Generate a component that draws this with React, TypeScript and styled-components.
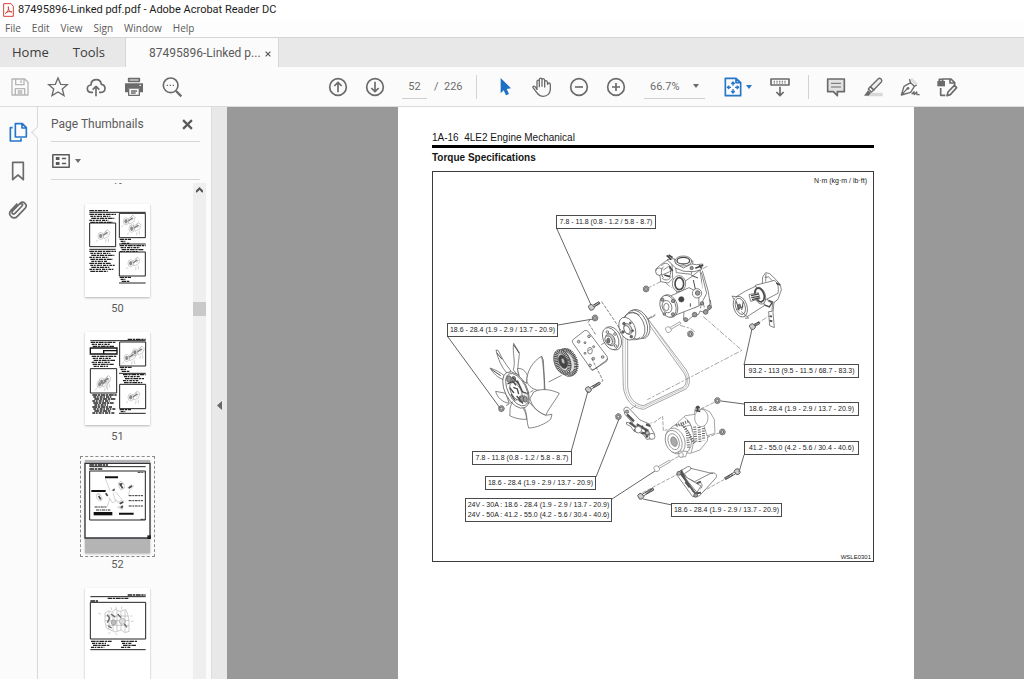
import React from "react";
import styled, { createGlobalStyle } from "styled-components";

const GlobalStyle = createGlobalStyle`
  * { box-sizing: border-box; }
  body { margin: 0; background: #fbfbfb; }
  button, input, select { font: inherit; color: inherit; }
  button { border: 0; padding: 0; background: none; cursor: pointer; }
`;

const uiFont = `Roboto, "Open Sans", sans-serif`;
const menuFont = `"Open Sans", "Noto Sans", sans-serif`;
const docFont = `"Liberation Sans", Arial, sans-serif`;

const Shell = styled.div`
  display: flex;
  flex-direction: column;
  height: 100vh;
  overflow: hidden;
  font-family: ${uiFont};
  font-size: 11px;
  color: #5a5a5a;
`;

const TitleBar = styled.header`
  display: flex;
  align-items: center;
  gap: 4px;
  flex: none;
  height: 20px;
  padding: 0 3px;
  background: #fff;
  color: #1c1c1c;
`;

const TitleText = styled.h1`
  margin: 0;
  font-size: 11px;
  font-weight: 400;
  line-height: 20px;
`;

const MenuBar = styled.nav`
  display: flex;
  gap: 11px;
  flex: none;
  height: 17px;
  padding: 0 5px;
  background: #fdfdfd;
  font-family: ${menuFont};
`;

const MenuItem = styled.button`
  font-size: 10px;
  line-height: 17px;
`;

const TabBar = styled.div`
  display: flex;
  flex: none;
  height: 30px;
  border-top: 1px solid #d6d6d6;
  background: #e8e8e8;
`;

const MainTabs = styled.div`
  display: flex;
  gap: 24px;
  width: 125px;
  padding: 0 0 2px 12px;
  font-family: ${menuFont};
  font-size: 13px;
  color: #3c3c3c;
`;

const FileTab = styled.div`
  display: flex;
  align-items: center;
  justify-content: space-between;
  width: 154px;
  padding: 0 7px 0 23px;
  border: solid #d6d6d6;
  border-width: 0 1px;
  background: #fbfbfb;
  font-size: 12px;
`;

const Toolbar = styled.div`
  display: flex;
  align-items: center;
  justify-content: space-between;
  flex: none;
  height: 40px;
  padding: 0 62px 0 5px;
  border-bottom: 1px solid #dcdcdc;
  background: #fbfbfb;
  color: #6b6b6b;
`;

const ToolGroup = styled.div<{ $gap?: number }>`
  display: flex;
  align-items: center;
  gap: ${(p) => p.$gap ?? 8}px;
`;

const ToolButton = styled.button<{ $tone?: string }>`
  display: flex;
  align-items: center;
  justify-content: center;
  width: 30px;
  height: 30px;
  color: ${(p) => p.$tone ?? "#6b6b6b"};
`;

const Divider = styled.span<{ $before: number; $after: number }>`
  width: 1px;
  height: 24px;
  margin: 0 ${(p) => p.$after}px 0 ${(p) => p.$before}px;
  background: #d2d2d2;
`;

const PageField = styled.input`
  width: 25px;
  height: 24px;
  margin-left: 5px;
  padding: 0;
  border: 0;
  border-bottom: 1px solid #cfcfcf;
  background: none;
  text-align: center;
`;

const PageTotal = styled.span`
  width: 26px;
  white-space: nowrap;
`;

const ZoomBox = styled.div`
  display: flex;
  align-items: center;
  width: 61px;
  height: 24px;
  margin-left: 6px;
  padding-right: 6px;
  border-bottom: 1px solid #cfcfcf;
`;

const ZoomSelect = styled.select`
  flex: 1;
  min-width: 0;
  appearance: none;
  border: 0;
  padding: 0 0 0 6px;
  background: none;
`;

const Caret = styled.span<{ $tone?: string }>`
  flex: none;
  border: 3px solid transparent;
  border-top: 4px solid ${(p) => p.$tone ?? "#6b6b6b"};
  border-bottom: 0;
`;

const FitButton = styled.button`
  display: flex;
  align-items: center;
  gap: 2px;
  width: 34px;
  margin: 0 2px 0 10px;
  color: #2777c9;
`;

const Body = styled.div`
  display: flex;
  flex: 1;
  min-height: 0;
`;

const Rail = styled.nav`
  position: relative;
  display: flex;
  flex-direction: column;
  gap: 15px;
  flex: none;
  width: 38px;
  padding-top: 13px;
  border-right: 1px solid #d9d9d9;
`;

const RailButton = styled.button<{ $active?: boolean }>`
  display: flex;
  align-items: center;
  justify-content: center;
  width: 35px;
  height: 24px;
  color: ${(p) => (p.$active ? "#2777c9" : "#6b6b6b")};

  &::after {
    content: "";
    display: ${(p) => (p.$active ? "block" : "none")};
    position: absolute;
    right: -5px;
    width: 8px;
    height: 8px;
    border: solid #d9d9d9;
    border-width: 0 0 1px 1px;
    background: #fbfbfb;
    transform: rotate(45deg);
  }
`;

const Panel = styled.aside`
  display: flex;
  flex-direction: column;
  flex: none;
  width: 174px;
  border-right: 1px solid #dedede;
`;

const PanelRow = styled.div<{ $height: number }>`
  display: flex;
  align-items: center;
  gap: 4px;
  flex: none;
  height: ${(p) => p.$height}px;
  margin: 0 11px 0 13px;
  border-bottom: 1px solid #d6d6d6;
`;

const PanelTitle = styled.h2`
  flex: 1;
  margin: 0;
  font-size: 12px;
  font-weight: 400;
`;

const PanelClose = styled.button`
  display: flex;
  padding: 4px 7px;
`;

const ThumbArea = styled.div`
  display: flex;
  flex: 1;
  min-height: 0;
  margin-top: 3px;
`;

const ThumbList = styled.div`
  display: flex;
  flex-direction: column;
  align-items: center;
  gap: 11px;
  flex: 1;
  padding-left: 4px;
  overflow: hidden;
`;

const ThumbItem = styled.button`
  flex: none;
  display: flex;
  flex-direction: column;
  align-items: center;
`;

const ThumbFrame = styled.span<{ $selected?: boolean }>`
  display: block;
  width: 75px;
  height: 101px;
  padding: 3px 4px;
  border: 1px dashed ${(p) => (p.$selected ? "#8a8a8a" : "transparent")};
`;

const ThumbPage = styled.span`
  display: block;
  height: 93px;
  background: #fff;
  box-shadow: 0 1px 2px #b5b5b5;
`;

const ThumbArt = styled.svg`
  display: block;
  width: 65px;
  height: 93px;
  overflow: visible;
`;

const ThumbLabel = styled.span<{ $cut?: boolean }>`
  display: block;
  flex: none;
  height: 16px;
  margin-top: ${(p) => (p.$cut ? -10 : 0)}px;
  line-height: 15px;
  font-size: 11px;
`;

const ScrollTrack = styled.div`
  display: flex;
  flex-direction: column;
  align-items: center;
  gap: 108px;
  flex: none;
  width: 13px;
  margin-right: 5px;
  padding-top: 4px;
  background: #efefef;
`;

const ScrollThumb = styled.div`
  width: 13px;
  height: 14px;
  background: #c9c9c9;
`;

const Collapser = styled.button`
  display: flex;
  align-items: center;
  justify-content: center;
  flex: none;
  width: 15px;
  padding-top: 24px;
  background: #e8e8e8;
`;

const Desk = styled.main`
  display: flex;
  justify-content: center;
  flex: 1;
  min-width: 0;
  padding-left: 61px;
  background: #999;
`;

const Sheet = styled.article`
  flex: none;
  width: 516px;
  padding: 24px 40px 0 34px;
  background: #fff;
  font-family: ${docFont};
  color: #161616;
`;

const SheetHeader = styled.p`
  margin: 0;
  border-bottom: 3px solid #000;
  font-size: 10px;
  line-height: 14px;
  white-space: pre;
`;

const SheetTitle = styled.h3`
  margin: 3px 0 6px;
  font-size: 10px;
  line-height: 14px;
`;

const Figure = styled.figure`
  position: relative;
  height: 391px;
  margin: 0;
  border: 1px solid #3a3a3a;
  font-size: 7px;
  color: #222;
`;

const Drawing = styled.svg`
  display: block;
  width: 440px;
  height: 389px;
`;

const Callout = styled.div<{ $x: number; $y: number; $w: number }>`
  position: absolute;
  left: ${(p) => p.$x}px;
  top: ${(p) => p.$y}px;
  width: ${(p) => p.$w}px;
  padding: 1px 0;
  border: 1px solid #4a4a4a;
  background: #fff;
  line-height: 10px;
  text-align: center;
  white-space: pre-line;
`;

const Units = styled.span`
  position: absolute;
  top: 4px;
  right: 6px;
  line-height: 10px;
`;

const DrawingNumber = styled.figcaption`
  position: absolute;
  right: 2px;
  bottom: 0;
  font-size: 6px;
  line-height: 8px;
`;

/* Every icon is drawn on a 66-unit grid. */
function Icon({ children, size = 22, width = 5 }: { children: React.ReactNode; size?: number; width?: number }) {
  return (
    <svg width={size} height={size} viewBox="0 0 66 66" fill="none" stroke="currentColor" strokeWidth={width} strokeLinejoin="round" aria-hidden="true">
      {children}
    </svg>
  );
}

const SaveIcon = () => (
  <Icon width={4}>
    <path d="M9 9H47L57 19V57H9ZM20 9V26H45V9M36 13V21M19 57V38H47V57M26 45H40M26 51H40" />
  </Icon>
);
const StarIcon = () => (
  <Icon width={4}>
    <path d="M33 6L41 25L61 26L46 39L51 59L33 48L15 59L20 39L5 26L25 25Z" strokeLinejoin="miter" />
  </Icon>
);
const CloudIcon = () => (
  <Icon>
    <path d="M24 49H17C3 47 4 28 18 27C18 7 46 5 49 25C64 27 63 48 49 49H42M33 61V32M23 41L33 31L43 41" />
  </Icon>
);
const PrintIcon = () => (
  <Icon>
    <path d="M17 8H49V16H17Z" />
    <path d="M6 22H60V49H51V38H15V49H6Z" fill="currentColor" stroke="none" />
    <path d="M17 38V58H49V38M24 45H42M24 51H38" strokeWidth="4" />
    <path d="M49 28H54" stroke="#fff" strokeWidth="3" />
  </Icon>
);
const FindIcon = () => (
  <Icon>
    <circle cx="29" cy="28" r="22" />
    <path d="M45 45L61 61" strokeWidth="7" />
    <path d="M17 28H42" strokeDasharray="4 5" strokeWidth="4" />
  </Icon>
);
const CircleIcon = ({ d }: { d: string }) => (
  <Icon>
    <circle cx="33" cy="33" r="25" />
    <path d={d} />
  </Icon>
);
const PointerIcon = () => (
  <Icon>
    <path d="M20 6L51 37L38 39L45 54L36 58L29 43L20 52Z" fill="currentColor" stroke="none" />
  </Icon>
);
const HandIcon = () => (
  <Icon width={4}>
    <path d="M18 42V17C18 11 25 11 25 17V32V11C25 5 33 5 33 11V31V12C33 6 41 7 41 13V33V18C41 12 49 13 49 19L50 25C51 19 58 20 58 26V41C57 52 49 61 37 61C27 61 21 55 17 49L6 35C4 29 11 27 18 40" />
  </Icon>
);
const FitIcon = () => (
  <Icon>
    <path d="M10 7H42L56 20V59H10ZM42 7V20H56" />
    <path d="M33 19V29M28 24L33 18L38 24M33 39V50M28 45L33 51L38 45M17 34H27M22 29L16 34L22 39M39 34H49M44 29L50 34L44 39" strokeWidth="4" />
  </Icon>
);
const KeysIcon = () => (
  <Icon>
    <path d="M6 9H60V27H6ZM33 32V58M22 48L33 59L44 48" />
    <path d="M14 16H53M14 21H53" strokeWidth="3" strokeDasharray="4 4" />
  </Icon>
);
const CommentIcon = () => (
  <Icon>
    <path d="M8 9H58V47H37V59L25 47H8Z" fill="#e2e2e2" />
    <path d="M18 22H48M18 33H48" strokeWidth="3" />
  </Icon>
);
const MarkerIcon = () => (
  <Icon width={4}>
    <path d="M27 50H62V61H12Z" fill="#d8d8d8" stroke="none" />
    <path d="M25 32L49 8C54 4 63 12 58 18L35 42Z" fill="#eee" />
    <path d="M25 32L19 39L28 48L36 42Z" />
    <path d="M18 43L6 59H20L27 50Z" fill="currentColor" stroke="none" />
  </Icon>
);
const SignIcon = () => (
  <Icon width={4}>
    <path d="M30 10L40 6L56 23L50 27Z" fill="#e0e0e0" stroke="none" />
    <path d="M31 10L35 20L46 31L53 27M35 20L15 31L7 57L35 49L46 31M8 56L25 38" />
    <path d="M38 55L45 47L46 56L53 48L54 56H62" />
    <circle cx="27" cy="37" r="4" fill="currentColor" stroke="none" />
  </Icon>
);
const EditDocIcon = () => (
  <Icon width={5}>
    <path d="M20 9H45L56 20V28M42 9V21H56M14 36V58H28" />
    <path d="M4 15H27V31H4Z" fill="currentColor" stroke="none" />
    <path d="M10 15V10H20V15" />
    <path d="M36 48L55 28L62 35L43 56L33 59Z" fill="#fbfbfb" />
  </Icon>
);
const AcrobatIcon = () => (
  <svg width="11" height="14" viewBox="0 0 33 42" aria-hidden="true">
    <path d="M2 2H24L31 10V40H2Z" fill="#fff" stroke="#d6403a" strokeWidth="3" />
    <path d="M7 31C14 29 18 18 16 11C15 20 21 28 27 27C20 24 12 26 7 31Z" fill="none" stroke="#d6403a" strokeWidth="3" />
  </svg>
);
const CrossIcon = ({ size, width }: { size: number; width: number }) => (
  <svg width={size} height={size} viewBox="0 0 10 10" stroke="currentColor" strokeWidth={width} aria-hidden="true">
    <path d="M1 1L9 9M9 1L1 9" />
  </svg>
);

/* Thumbnails: a 195 x 279 grid, three units to the pixel. */
type Block = { x: number; y: number; w: number; rows: number };

function TextBlock({ x, y, w, rows }: Block) {
  return (
    <g stroke="#222" strokeWidth="4">
      {Array.from({ length: rows }, (_, i) => (
        <path key={i} d={`M${x + (i % 3) * 3} ${y + i * 6}H${x + w - ((i * 17) % 29)}`} strokeDasharray={i % 2 ? "9 2 5 3" : "14 2 7 2"} />
      ))}
    </g>
  );
}

const Gear = ({ x, y }: { x: number; y: number }) => (
  <g transform={`translate(${x} ${y})`} fill="none" stroke="#777" strokeWidth="1">
    <ellipse cx="-8" cy="6" rx="8" ry="11" />
    <ellipse cx="-8" cy="6" rx="4" ry="6" fill="#888" />
    <path d="M-2 0L12-12L20-6L16 7L2 14ZM12-12L4-4M8 4L16-3M-16 18L-22 23M8 16L7 26M14 12L16 24M4 2L14-4" />
    <path d="M0 4L12-5" strokeWidth="4" />
  </g>
);

function ThumbFifty() {
  return (
    <>
      <path d="M13 25H182M102 120H182M13 136H92M102 237H182" stroke="#222" strokeWidth="3" />
      <TextBlock x={13} y={20} w={56} rows={1} />
      <TextBlock x={13} y={31} w={80} rows={5} />
      <TextBlock x={13} y={142} w={80} rows={11} />
      <TextBlock x={104} y={106} w={34} rows={3} />
      <TextBlock x={104} y={125} w={78} rows={4} />
      <TextBlock x={104} y={220} w={34} rows={3} />
      <g fill="#fff" stroke="#222" strokeWidth="3">
        <path d="M14 57H92V128H14ZM103 28H181V101H103ZM103 144H181V216H103Z" />
      </g>
      <Gear x={55} y={90} />
      <Gear x={131} y={46} />
      <Gear x={148} y={68} />
      <Gear x={145} y={172} />
    </>
  );
}

function ThumbFiftyOne() {
  return (
    <>
      <path d="M16 26H182M102 124H182M102 244H182" stroke="#222" strokeWidth="3" />
      <TextBlock x={128} y={22} w={54} rows={1} />
      <TextBlock x={17} y={31} w={76} rows={3} />
      <path d="M16 48H96V66H16ZM56 56H96V66H56Z" fill="#fff" stroke="#111" strokeWidth="4" />
      <TextBlock x={20} y={73} w={76} rows={6} />
      <TextBlock x={22} y={189} w={74} rows={10} />
      <TextBlock x={104} y={106} w={36} rows={3} />
      <TextBlock x={114} y={128} w={68} rows={5} />
      <TextBlock x={104} y={233} w={34} rows={2} />
      <g fill="#fff" stroke="#222" strokeWidth="3">
        <path d="M16 110H95V183H16ZM104 30H182V102H104ZM104 157H182V230H104Z" />
      </g>
      <Gear x={58} y={143} />
      <Gear x={52} y={151} />
      <Gear x={133} y={72} />
      <Gear x={158} y={55} />
      <Gear x={145} y={190} />
    </>
  );
}

function ThumbFiftyTwo() {
  return (
    <>
      <path d="M0 0H195V8H0ZM0 234H195V279H0Z" fill="#b4b4b4" />
      <path d="M13 20H182" stroke="#222" strokeWidth="3" />
      <TextBlock x={13} y={15} w={56} rows={1} />
      <TextBlock x={13} y={27} w={40} rows={1} />
      <path d="M14 33H181V180H14Z" fill="#fff" stroke="#222" strokeWidth="3" />
      <path d="M60 52H99M19 93H62M102 161H146" stroke="#111" strokeWidth="6" />
      <path d="M131 107H174M131 122H174M131 138H174M29 141H66M33 150H76M158 37H178M167 178H180" stroke="#333" strokeWidth="3" strokeDasharray="9 2 5 2" />
      <path d="M26 161H82" stroke="#111" strokeWidth="10" />
      <g stroke="#777" strokeWidth="1" fill="none">
        <path d="M61 56L75 92M38 98L50 122M66 141L75 115M134 90L131 105M92 96L112 120L98 128M72 112L82 128L92 124L84 98" />
        <path d="M100 68L108 64L116 70L119 84L108 90L102 80ZM128 84L138 74L146 78L136 88ZM34 104L44 100L52 116L44 124L36 116ZM80 92L90 84M92 118L100 128M104 128L118 122M98 142L114 136L112 148Z" />
      </g>
      <path d="M104 70L113 85M104 76L112 70M131 84L141 78M41 108L47 118M62 100L68 108M83 92L89 88M104 131L115 126M107 143L114 139" stroke="#444" strokeWidth="5" />
      <path d="M0 10H195V234H0Z" fill="none" stroke="#33343a" strokeWidth="4" />
      <path d="M187 226H198V237H187Z" fill="#222" />
    </>
  );
}

function ThumbFiftyThree() {
  return (
    <>
      <path d="M16 26H182M16 185H182" stroke="#222" strokeWidth="3" />
      <TextBlock x={128} y={21} w={54} rows={1} />
      <TextBlock x={68} y={31} w={62} rows={1} />
      <TextBlock x={16} y={39} w={24} rows={1} />
      <path d="M16 43H182V153H16Z" fill="none" stroke="#222" strokeWidth="3" />
      <TextBlock x={18} y={160} w={62} rows={4} />
      <TextBlock x={108} y={160} w={50} rows={4} />
      <g fill="none" stroke="#666" strokeWidth="1">
        <path d="M60 75L72 68L80 72L92 64L104 70L122 65L128 78L132 96V130L120 134L108 126L92 132L78 127L64 120L60 100ZM72 70V125M84 72V128M96 68V130M108 70V126M120 68V132M60 84H130M60 98H132M64 112H132M48 78L40 76M78 58L80 66M92 56L94 65M110 56V64M136 84H142M138 100H146M76 132L70 138M92 136L96 141" />
        <circle cx="86" cy="103" r="8" fill="#bbb" />
        <circle cx="112" cy="100" r="9" fill="#ddd" />
        <path d="M66 80L74 90L67 104M78 78L91 88M98 78L108 89M118 108L126 118M70 114L80 120" strokeWidth="4" />
      </g>
    </>
  );
}

const thumbs = [
  { page: 50, art: <ThumbFifty /> },
  { page: 51, art: <ThumbFiftyOne /> },
  { page: 52, art: <ThumbFiftyTwo /> },
  { page: 53, art: <ThumbFiftyThree /> },
];

/* Engine parts: each group is drawn at three units to the pixel. */
const Nut = ({ x, y }: { x: number; y: number }) => (
  <g transform={`translate(${x} ${y})`}>
    <path d="M-8-4L-3-9L5-8L9-1L7 6L0 9L-7 6Z" fill="#aaa" />
    <ellipse rx="4" ry="4" fill="#ddd" />
  </g>
);

const Bolt = ({ x, y, len = 36, pale }: { x: number; y: number; len?: number; pale?: boolean }) => (
  <g transform={`translate(${x} ${y}) rotate(-30)`} stroke={pale ? "#888" : "#333"}>
    <path d={`M6-3H${len}V3H6`} fill="#fff" />
    {!pale && <path d={`M${len * 0.4} 0H${len}`} strokeWidth="8" strokeDasharray="2 2" />}
    <path d="M-7-6L-1-9L6-7L8 6L0 9L-7 6Z" fill={pale ? "#fff" : "#ccc"} />
  </g>
);

function FanAndDrive() {
  return (
    <g transform="translate(-3 118) scale(.3333)">
      <g fill="#fff">
        <path d="M251 160C246 188 258 212 250 240L266 258C260 228 268 210 268 188Z" />
        <path d="M198 180C203 205 215 232 231 250L243 243C226 222 216 205 205 182Z" />
        <path d="M180 234C190 250 203 263 218 268L224 258C212 248 198 240 180 234Z" />
        <path d="M251 165C256 172 262 180 267 189M200 188L216 208M184 238L212 257" fill="none" strokeWidth="3" />
        <path d="M262 236C277 233 287 244 292 256L290 280L270 266Z" />
        <path d="M335 199C309 212 288 247 291 276C299 296 322 304 343 301C343 258 340 228 335 199ZM335 199L340 210L345 300" />
        <path d="M300 326L311 306C338 292 369 301 388 310C377 331 359 350 347 376C323 367 305 348 300 326Z" />
        <path d="M280 347C293 370 289 394 296 414C319 414 345 402 362 388L366 373L347 376C323 367 308 349 300 338Z" />
        <path d="M246 340C237 354 242 365 239 377C253 385 274 389 290 388C289 370 282 356 274 349Z" />
        <path d="M227 310L197 304C202 324 218 337 238 340Z" />
        <ellipse cx="258" cy="300" rx="33" ry="59" transform="rotate(-27 258 300)" />
        <ellipse cx="261" cy="299" rx="27" ry="53" transform="rotate(-27 261 299)" />
        <ellipse cx="258" cy="304" rx="15" ry="29" transform="rotate(-27 258 304)" />
      </g>
      <g fill="#999">
        <ellipse cx="237" cy="267" rx="7" ry="10" />
        <ellipse cx="251" cy="268" rx="6" ry="9" />
        <ellipse cx="274" cy="327" rx="8" ry="10" />
        <ellipse cx="286" cy="328" rx="6" ry="9" />
        <path d="M232 282L248 274L258 286M239 293L252 309M262 272L278 306L290 310M260 318L279 341M247 262L266 281L273 296M243 312L254 330M250 292L262 297L266 312" fill="none" strokeWidth="4" />
      </g>
      <ellipse cx="410" cy="218" rx="29" ry="43" transform="rotate(-20 410 218)" fill="#ddd" />
      <ellipse cx="414" cy="216" rx="23" ry="37" transform="rotate(-20 414 216)" fill="none" strokeWidth="13" strokeDasharray="3 2" />
      <ellipse cx="397" cy="216" rx="24" ry="39" transform="rotate(-20 397 216)" fill="#ddd" />
      <ellipse cx="398" cy="216" rx="18" ry="32" transform="rotate(-20 398 216)" fill="none" strokeWidth="12" strokeDasharray="3 2" />
      <ellipse cx="399" cy="215" rx="12" ry="21" transform="rotate(-20 399 215)" fill="#444" />
      <ellipse cx="399" cy="213" rx="5" ry="9" transform="rotate(-20 399 213)" fill="#bbb" />
      <path d="M430 148L464 122Q470 119 475 125L531 199Q535 206 529 211L494 237Q486 242 481 234L428 158Q425 153 430 148Z" fill="#fff" />
      <path d="M481 236L487 242L530 214L533 205" fill="none" />
      <ellipse cx="480" cy="182" rx="7" ry="10" fill="#fff" />
      <path d="M475 182L484 177" />
      <g fill="#ccc">
        <circle cx="446" cy="155" r="4" />
        <circle cx="477" cy="139" r="4" />
        <circle cx="465" cy="158" r="3" />
        <circle cx="491" cy="170" r="3" />
        <circle cx="465" cy="190" r="3" />
        <circle cx="490" cy="206" r="4" />
        <circle cx="518" cy="201" r="4" />
        <circle cx="480" cy="226" r="4" />
      </g>
      <path d="M514 164L530 154M356 276L395 256M650 90L676 76M568 130L582 122" />
      <ellipse cx="548" cy="145" rx="24" ry="37" transform="rotate(-25 548 145)" fill="#fff" />
      <ellipse cx="542" cy="146" rx="22" ry="35" transform="rotate(-25 542 146)" fill="#fff" />
      <ellipse cx="541" cy="149" rx="13" ry="19" transform="rotate(-25 541 149)" fill="#ccc" />
      <ellipse cx="536" cy="151" rx="10" ry="14" transform="rotate(-25 536 151)" fill="#fff" />
      <ellipse cx="535" cy="152" rx="5" ry="8" fill="#777" />
      <g fill="#eee">
        <circle cx="532" cy="126" r="4" />
        <circle cx="555" cy="132" r="4" />
        <circle cx="557" cy="168" r="4" />
      </g>
      <path d="M579 136C577 190 579 250 580 290C584 328 606 355 641 358L676 341L766 298C782 288 782 262 769 240L646 76" fill="none" stroke="#777" />
      <path d="M593 145L593 290C596 322 613 344 641 347L674 331L760 291C772 282 771 262 760 246L648 91" fill="none" stroke="#777" />
      <path d="M586 142L586 291C590 325 610 350 641 352L675 336L763 294C776 286 776 262 764 243L650 82" fill="none" stroke="#aaa" />
      <ellipse cx="627" cy="102" rx="30" ry="46" transform="rotate(-24 627 102)" fill="#fff" />
      <ellipse cx="621" cy="103" rx="29" ry="45" transform="rotate(-24 621 103)" fill="#fff" />
      <ellipse cx="614" cy="107" rx="28" ry="43" transform="rotate(-24 614 107)" fill="#fff" />
      <path d="M580 84C592 67 612 64 629 75M601 148C612 151 624 149 631 141" fill="none" />
      <ellipse cx="592" cy="116" rx="23" ry="36" transform="rotate(-24 592 116)" fill="#fff" />
      <ellipse cx="594" cy="117" rx="11" ry="17" transform="rotate(-24 594 117)" fill="#ddd" />
      <ellipse cx="591" cy="119" rx="8" ry="13" transform="rotate(-24 591 119)" fill="#fff" />
      <g fill="#666">
        <circle cx="582" cy="101" r="4" />
        <circle cx="601" cy="99" r="3" />
        <circle cx="579" cy="126" r="4" />
        <circle cx="604" cy="140" r="4" />
        <circle cx="608" cy="122" r="3" />
      </g>
      <path d="M515 35L573 121M480 90L474 97L497 134M485 205L519 272L504 282M228 347L312 300" fill="none" strokeDasharray="10 4" />
      <Bolt x={484} y={52} len={28} />
      <Bolt x={475} y={299} len={40} />
      <Nut x={495} y={84} />
      <Nut x={214} y={356} />
      <Nut x={565} y={380} />
    </g>
  );
}

function PumpAndStarter() {
  return (
    <g transform="translate(207 -12) scale(.3333)">
      <path d="M190 470L306 571L22 719M20 386L68 362L96 384M120 496L153 506L168 519M22 477L46 463M202 319L174 333M338 500L388 467" fill="none" stroke="#777" strokeDasharray="16 5 7 5" />
      <g fill="#fff">
        <path d="M82 300L60 316L47 328L50 342L60 347L62 365L85 369L98 356L96 310Z" />
        <circle cx="58" cy="335" r="11" />
        <ellipse cx="78" cy="337" rx="14" ry="20" />
        <path d="M64 318C73 305 88 308 91 324M66 355C77 364 90 360 93 349M70 330L86 319M66 345L94 333" />
        <path d="M104 300L109 338L154 343L159 303Z" />
        <path d="M81 299L103 296L107 311L130 324L155 312L170 314L188 312L184 329L162 335L132 334L108 325Z" />
        <ellipse cx="130" cy="303" rx="25" ry="15" />
        <ellipse cx="130" cy="302" rx="19" ry="10" strokeWidth="4" />
        <path d="M180 330L186 370L196 410L211 420L214 443L198 459L180 453L176 463L159 468L139 485L131 478L132 448L116 426L108 383L155 350Z" />
        <path d="M187 332L205 395L210 430L204 449L193 451M184 337L200 400L188 423L193 442M181 445L184 432L162 444" />
        <ellipse cx="117" cy="371" rx="20" ry="24" />
        <ellipse cx="118" cy="371" rx="13" ry="18" strokeWidth="5" />
        <path d="M94 407L147 383L176 398L177 438L107 465Z" />
        <ellipse cx="88" cy="438" rx="24" ry="35" transform="rotate(-20 88 438)" />
        <ellipse cx="84" cy="439" rx="23" ry="34" transform="rotate(-20 84 439)" />
        <ellipse cx="81" cy="440" rx="14" ry="19" transform="rotate(-20 81 440)" />
        <ellipse cx="79" cy="441" rx="8" ry="11" />
        <circle cx="171" cy="400" r="14" />
        <circle cx="173" cy="399" r="7" fill="#999" />
        <circle cx="124" cy="418" r="8" fill="#444" />
      </g>
      <g fill="#999">
        <circle cx="67" cy="419" r="5" />
        <circle cx="99" cy="423" r="5" />
        <circle cx="99" cy="463" r="5" />
        <circle cx="73" cy="462" r="4" />
        <circle cx="137" cy="479" r="6" />
        <circle cx="164" cy="464" r="7" />
        <circle cx="197" cy="456" r="7" />
        <circle cx="208" cy="442" r="6" />
        <circle cx="186" cy="430" r="5" />
        <circle cx="155" cy="324" r="5" />
      </g>
      <path d="M80 286L94 299M86 285L98 293M166 325L190 315M178 315L184 325M73 345L90 350M88 319L98 333" strokeWidth="5" />
      <path d="M154 346L174 354M160 360L166 387M151 430V440" strokeWidth="3" />
      <Bolt x={85} y={509} len={42} pale />
      <Nut x={18} y={387} />
      <Nut x={151} y={522} />

      <g fill="#fff">
        <path d="M367 370L368 351L377 338L389 341L407 358L421 374L424 390L414 418L399 430L385 424Z" />
        <path d="M374 352L386 351L405 370M378 341L377 365" />
        <path d="M282 414L317 393L357 374L365 389L373 437L318 472L290 455Z" />
        <path d="M346 376L404 361Q419 375 414 400L368 424Z" />
        <ellipse cx="360" cy="407" rx="16" ry="26" transform="rotate(-18 360 407)" />
        <ellipse cx="359" cy="405" rx="13" ry="21" transform="rotate(-18 359 405)" strokeWidth="5" />
        <path d="M327 404L355 398L360 416L332 424Z" />
        <path d="M333 407L356 402M334 413L357 409M336 419L358 414" strokeWidth="4" />
        <ellipse cx="301" cy="440" rx="20" ry="32" transform="rotate(-18 301 440)" />
        <ellipse cx="301" cy="439" rx="14" ry="25" transform="rotate(-18 301 439)" />
        <path d="M281 417L276 408L290 411M318 467L326 474L315 475M304 455L317 466" />
        <path d="M373 435L388 441L397 427M386 421L401 428" strokeWidth="4" />
        <path d="M402 426L399 457L403 503L389 497L386 455L396 454L398 426" />
        <path d="M389 468L396 470M389 482L397 484M409 369L420 375" strokeWidth="5" />
      </g>
      <path d="M289 424L297 452M310 425L305 450M290 448L310 440" strokeWidth="3" />
      <ellipse cx="298" cy="439" rx="4" ry="7" fill="#777" />
      <Bolt x={337} y={500} len={24} />
    </g>
  );
}

function AlternatorAndBracket() {
  return (
    <g transform="translate(207 218) scale(.3333)">
      <path d="M168 64L231 33M199 143L248 125M50 236L125 194M8 308L112 253M295 245L158 321M41 98L68 79L70 122L82 119" fill="none" stroke="#777" strokeDasharray="12 4" />
      <g fill="#fff" stroke="#777">
        <path d="M101 109L136 77L165 73L189 99L206 114L202 153L180 180L151 190L121 186Z" />
        <path d="M163 70L188 55L210 66L223 88L225 130L201 137L190 100Z" />
        <path d="M163 71L166 55L181 57L184 90M188 56L195 98" />
        <ellipse cx="184" cy="84" rx="20" ry="26" />
        <path d="M145 93C160 111 167 151 153 188M133 81C151 95 156 114 157 125M100 118L152 105" />
        <ellipse cx="119" cy="148" rx="34" ry="45" transform="rotate(-20 119 148)" />
        <ellipse cx="106" cy="153" rx="28" ry="40" transform="rotate(-20 106 153)" />
        <ellipse cx="101" cy="155" rx="24" ry="35" transform="rotate(-20 101 155)" />
        <ellipse cx="101" cy="155" rx="16" ry="25" transform="rotate(-20 101 155)" />
        <ellipse cx="102" cy="155" rx="9" ry="15" transform="rotate(-20 102 155)" fill="#aaa" />
        <path d="M114 184L121 201L137 200L142 184Z" />
        <circle cx="123" cy="195" r="7" />
      </g>
      <path d="M109 107L148 93M125 98L163 160M142 128L146 174M164 110L168 158M177 111L180 157M190 115L191 151" stroke="#666" strokeWidth="9" strokeDasharray="3 4" />
      <path d="M173 48V65M166 61L181 64M173 48L168 54M173 48L179 54" strokeWidth="5" />
      <g fill="#fff">
        <path d="M112 248L143 230C153 228 157 237 147 242L133 251L141 264L164 275L214 249C227 246 235 257 225 267L178 318L158 320L110 254Z" />
        <path d="M126 253L171 307L183 288L139 262ZM152 235L219 251M173 277C187 274 190 291 181 297M132 257L159 306" />
      </g>
      <path d="M120 248L167 312M123 240L133 260M166 310L183 308M136 276L149 292M170 280L183 275" strokeWidth="6" stroke="#555" />
      <circle cx="167" cy="316" r="6" fill="#999" />
      <circle cx="117" cy="250" r="6" fill="#aaa" />
      <Bolt x={50} y={236} len={46} pale />
      <Bolt x={2} y={319} len={44} />
      <g transform="rotate(180 292 245)">
        <Bolt x={292} y={245} len={42} />
      </g>
      <Nut x={232} y={32} />
      <Nut x={247} y={126} />
      <g transform="translate(-630 30)">
        <path d="M583 38L618 17M651 75L665 68" strokeDasharray="8 4" />
        <path d="M583 35C577 23 591 17 598 26L630 60L656 71L666 88L673 101L665 116L650 118L641 105L627 96L612 94L602 79L590 73L589 67L609 70L584 42Z" fill="#fff" />
        <circle cx="591" cy="35" r="5" fill="#aaa" />
        <path d="M591 43L612 64M599 68L619 83M613 91L640 79M620 73L655 93M634 98L658 103M648 73L661 78M647 87L651 113" strokeWidth="7" stroke="#555" />
        <circle cx="625" cy="89" r="10" fill="#fff" />
        <circle cx="666" cy="109" r="9" fill="#fff" />
        <circle cx="652" cy="99" r="6" fill="#bbb" />
      </g>
    </g>
  );
}

const leaders =
  "M124 57L158 133M125 153L160 147M15 165L67 236M311 193L319 157M311 232L288 229M311 283L306 300M239 333L210 327M138 280L155 219M163 305L186 247M179 327L222 299";

const callouts = [
  { x: 123, y: 43, w: 100, text: "7.8 - 11.8 (0.8 - 1.2 / 5.8 - 8.7)" },
  { x: 14, y: 151, w: 111, text: "18.6 - 28.4 (1.9 - 2.9 / 13.7 - 20.9)" },
  { x: 311, y: 192, w: 115, text: "93.2 - 113 (9.5 - 11.5 / 68.7 - 83.3)" },
  { x: 311, y: 230, w: 115, text: "18.6 - 28.4 (1.9 - 2.9 / 13.7 - 20.9)" },
  { x: 311, y: 269, w: 115, text: "41.2 - 55.0 (4.2 - 5.6 / 30.4 - 40.6)" },
  { x: 238, y: 331, w: 111, text: "18.6 - 28.4 (1.9 - 2.9 / 13.7 - 20.9)" },
  { x: 39, y: 279, w: 100, text: "7.8 - 11.8 (0.8 - 1.2 / 5.8 - 8.7)" },
  { x: 52, y: 304, w: 111, text: "18.6 - 28.4 (1.9 - 2.9 / 13.7 - 20.9)" },
  { x: 32, y: 326, w: 147, text: "24V - 30A : 18.6 - 28.4 (1.9 - 2.9 / 13.7 - 20.9)\n24V - 50A : 41.2 - 55.0 (4.2 - 5.6 / 30.4 - 40.6)" },
];

const menus = ["File", "Edit", "View", "Sign", "Window", "Help"];

export default function App() {
  return (
    <Shell>
      <GlobalStyle />
      <TitleBar>
        <AcrobatIcon />
        <TitleText>87495896-Linked pdf.pdf - Adobe Acrobat Reader DC</TitleText>
      </TitleBar>
      <MenuBar aria-label="Menu">
        {menus.map((m) => (
          <MenuItem key={m}>{m}</MenuItem>
        ))}
      </MenuBar>
      <TabBar>
        <MainTabs>
          <button>Home</button>
          <button>Tools</button>
        </MainTabs>
        <FileTab>
          <button>87495896-Linked p...</button>
          <button aria-label="Close tab">
            <CrossIcon size={6} width={2} />
          </button>
        </FileTab>
      </TabBar>

      <Toolbar>
        <ToolGroup>
          <ToolButton aria-label="Save" $tone="#b5b5b5"><SaveIcon /></ToolButton>
          <ToolButton aria-label="Star"><StarIcon /></ToolButton>
          <ToolButton aria-label="Upload"><CloudIcon /></ToolButton>
          <ToolButton aria-label="Print"><PrintIcon /></ToolButton>
          <ToolButton aria-label="Find"><FindIcon /></ToolButton>
        </ToolGroup>
        <ToolGroup $gap={7}>
          <ToolButton aria-label="Previous page"><CircleIcon d="M33 49V19M22 30L33 19L44 30" /></ToolButton>
          <ToolButton aria-label="Next page"><CircleIcon d="M33 17V47M22 36L33 47L44 36" /></ToolButton>
          <PageField aria-label="Page number" defaultValue="52" />
          <PageTotal>/&nbsp; 226</PageTotal>
          <Divider $before={9} $after={6} />
          <ToolButton aria-label="Select" $tone="#1f6fc5"><PointerIcon /></ToolButton>
          <ToolButton aria-label="Pan"><HandIcon /></ToolButton>
          <ToolButton aria-label="Zoom out"><CircleIcon d="M21 33H45" /></ToolButton>
          <ToolButton aria-label="Zoom in"><CircleIcon d="M21 33H45M33 21V45" /></ToolButton>
          <ZoomBox>
            <ZoomSelect aria-label="Zoom level" defaultValue="66.7%">
              <option>66.7%</option>
            </ZoomSelect>
            <Caret />
          </ZoomBox>
          <FitButton aria-label="Fit page">
            <FitIcon />
            <Caret $tone="#2777c9" />
          </FitButton>
          <ToolButton aria-label="Read mode"><KeysIcon /></ToolButton>
          <Divider $before={6} $after={5} />
          <ToolButton aria-label="Comment"><CommentIcon /></ToolButton>
          <ToolButton aria-label="Highlight"><MarkerIcon /></ToolButton>
          <ToolButton aria-label="Sign"><SignIcon /></ToolButton>
          <ToolButton aria-label="Edit document"><EditDocIcon /></ToolButton>
        </ToolGroup>
      </Toolbar>

      <Body>
        <Rail aria-label="Panels">
          <RailButton $active aria-label="Page thumbnails">
            <Icon>
              <path d="M25 8H46L58 20V48H25ZM45 8V21H58M17 20H10V60H42V52" />
            </Icon>
          </RailButton>
          <RailButton aria-label="Bookmarks">
            <Icon>
              <path d="M17 7H49V59L33 45L17 59Z" />
            </Icon>
          </RailButton>
          <RailButton aria-label="Attachments">
            <Icon>
              <path d="M45 21L24 43C19 49 12 42 17 36L39 13C49 4 64 17 54 28L31 52C19 64 0 48 12 34L31 14M45 21C49 16 45 12 40 16" />
            </Icon>
          </RailButton>
        </Rail>

        <Panel>
          <PanelRow $height={35}>
            <PanelTitle>Page Thumbnails</PanelTitle>
            <PanelClose aria-label="Close panel">
              <CrossIcon size={11} width={2} />
            </PanelClose>
          </PanelRow>
          <PanelRow $height={38}>
            <Icon size={20}>
              <path d="M6 12H60V54H6ZM36 25H50M36 41H50" />
              <path d="M16 20H28V30H16ZM16 36H28V46H16Z" fill="currentColor" stroke="none" />
            </Icon>
            <Caret />
          </PanelRow>
          <ThumbArea>
            <ThumbList>
              <ThumbLabel $cut>49</ThumbLabel>
              {thumbs.map(({ page, art }) => (
                <ThumbItem key={page} aria-label={`Page ${page}`}>
                  <ThumbFrame $selected={page === 52}>
                    <ThumbPage>
                      <ThumbArt viewBox="0 0 195 279" aria-hidden="true">{art}</ThumbArt>
                    </ThumbPage>
                  </ThumbFrame>
                  <ThumbLabel>{page}</ThumbLabel>
                </ThumbItem>
              ))}
            </ThumbList>
            <ScrollTrack>
              <svg width="7" height="7" viewBox="0 0 7 7" fill="none" stroke="#555" strokeWidth="2" aria-hidden="true">
                <path d="M0 5L3.5 1.5L7 5" />
              </svg>
              <ScrollThumb />
            </ScrollTrack>
          </ThumbArea>
        </Panel>

        <Collapser aria-label="Collapse panel">
          <svg width="5" height="9" viewBox="0 0 5 9" fill="#666" aria-hidden="true">
            <path d="M5 0V9L0 4.5Z" />
          </svg>
        </Collapser>

        <Desk>
          <Sheet>
            <SheetHeader>{"1A-16  4LE2 Engine Mechanical"}</SheetHeader>
            <SheetTitle>Torque Specifications</SheetTitle>
            <Figure>
              <Drawing viewBox="0 0 440 389" fill="none" aria-hidden="true">
                <g stroke="#4a4a4a" strokeWidth="2">
                  <FanAndDrive />
                  <PumpAndStarter />
                  <AlternatorAndBracket />
                </g>
                <path d={leaders} stroke="#666" strokeWidth="1" />
              </Drawing>
              {callouts.map((c) => (
                <Callout key={`${c.x}-${c.y}`} $x={c.x} $y={c.y} $w={c.w}>
                  {c.text}
                </Callout>
              ))}
              <Units>N·m (kg·m / lb·ft)</Units>
              <DrawingNumber>WSLE0301</DrawingNumber>
            </Figure>
          </Sheet>
        </Desk>
      </Body>
    </Shell>
  );
}
